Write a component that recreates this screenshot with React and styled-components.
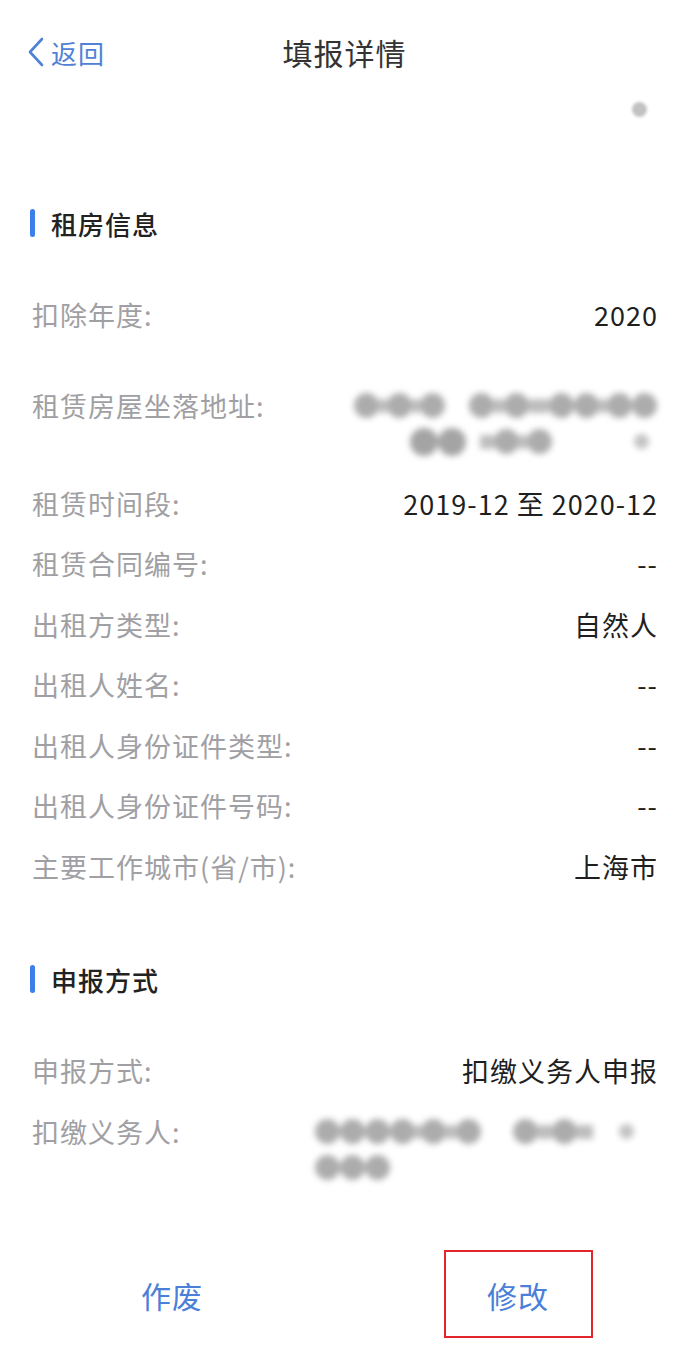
import React from "react";
import styled, { createGlobalStyle } from "styled-components";

//-----데이터
const rentRows = [
  { label: "扣除年度:", value: "2020" },
  {
    label: "租赁房屋坐落地址:",
    gap: 30,
    blur: {
      align: "right",
      lines: [
        [["o", 8, "o", 8, "o"], ["o", 10, "o", 20, "o", "o", 8, "o", "o"]],
        [["O", "O"], [14, "o", 8, "o"], ["d"]],
      ],
      lineGaps: [[24], [14, 82]],
      padRight: [0, 8],
    },
  },
  { label: "租赁时间段:", value: "2019-12 至 2020-12", gap: 2 },
  { label: "租赁合同编号:", value: "--" },
  { label: "出租方类型:", value: "自然人" },
  { label: "出租人姓名:", value: "--" },
  { label: "出租人身份证件类型:", value: "--" },
  { label: "出租人身份证件号码:", value: "--" },
  { label: "主要工作城市(省/市):", value: "上海市" },
];

const reportRows = [
  { label: "申报方式:", value: "扣缴义务人申报" },
  {
    label: "扣缴义务人:",
    blur: {
      align: "left",
      width: 342,
      lines: [
        [["o", "o", "o", "o", 6, "o", 10, "o"], ["o", 14, "o", 16], ["d"]],
        [["o", "o", "o"]],
      ],
      lineGaps: [[32, 26], []],
      padRight: [0, 0],
    },
  },
];

//-----부품: 가려진 글자 (흐림 처리)
function BlurSegment({ tokens }) {
  return (
    <Segment>
      {tokens.map((t, i) => {
        if (typeof t === "number") return <Link key={i} style={{ width: t }} />;
        return <Bead key={i} $kind={t} />;
      })}
    </Segment>
  );
}

function BlurValue({ blur }) {
  return (
    <BlurBlock $align={blur.align} $width={blur.width}>
      {blur.lines.map((segs, li) => (
        <BlurLine key={li} $align={blur.align} $padRight={blur.padRight[li]}>
          {segs.map((seg, si) => (
            <React.Fragment key={si}>
              {si > 0 && <Spacer style={{ width: blur.lineGaps[li][si - 1] }} />}
              <BlurSegment tokens={seg} />
            </React.Fragment>
          ))}
        </BlurLine>
      ))}
    </BlurBlock>
  );
}

function InfoRow({ row }) {
  return (
    <Row $gap={row.gap || 0}>
      <Label>{row.label}</Label>
      {row.blur ? <BlurValue blur={row.blur} /> : <Value>{row.value}</Value>}
    </Row>
  );
}

//-----메인
export default function App() {
  return (
    <>
      <GlobalStyle />
      <Page>
        <Header>
          <Back>
            <svg width="18" height="30" viewBox="0 0 18 30">
              <path
                d="M15 2 L3 15 L15 28"
                fill="none"
                stroke="#4f82d6"
                strokeWidth="2.6"
                strokeLinecap="round"
                strokeLinejoin="round"
              />
            </svg>
            <span>返回</span>
          </Back>
          <Title>填报详情</Title>
        </Header>

        <TopDotRow>
          <Bead $kind="d" />
        </TopDotRow>

        <SectionTitle $top={92}>租房信息</SectionTitle>
        {rentRows.map((row) => (
          <InfoRow key={row.label} row={row} />
        ))}

        <SectionTitle $top={68}>申报方式</SectionTitle>
        {reportRows.map((row) => (
          <InfoRow key={row.label} row={row} />
        ))}

        <Footer>
          <ActionCell>
            <Action>作废</Action>
          </ActionCell>
          <ActionCell>
            <Action $marked>修改</Action>
          </ActionCell>
        </Footer>
      </Page>
    </>
  );
}

//-----스타일
const GlobalStyle = createGlobalStyle`
  body {
    margin: 0;
    background: #ffffff;
    font-family: "Noto Sans CJK SC", "Noto Sans", sans-serif;
  }
`;

const Page = styled.div`
  width: 688px;
  min-height: 1363px;
  background: #ffffff;
  display: flex;
  flex-direction: column;
  padding: 0 31px 0 32px;
  box-sizing: border-box;
`;

const Header = styled.div`
  position: relative;
  height: 80px;
  margin-top: 12px;
  display: flex;
  align-items: center;
  justify-content: center;
`;

const Back = styled.div`
  position: absolute;
  left: -5px;
  top: 0;
  height: 80px;
  display: flex;
  align-items: center;
  gap: 6px;
  color: #4f82d6;
  font-size: 26px;
  letter-spacing: 1px;
`;

const Title = styled.div`
  font-size: 30px;
  color: #333333;
  letter-spacing: 1px;
`;

const TopDotRow = styled.div`
  display: flex;
  justify-content: flex-end;
  margin-top: 10px;
  padding-right: 10px;
  filter: blur(1.5px);
`;

const SectionTitle = styled.div`
  display: flex;
  align-items: center;
  gap: 16px;
  height: 28px;
  margin-top: ${(p) => p.$top}px;
  margin-bottom: 48px;
  margin-left: -2px;
  font-size: 26px;
  font-weight: 500;
  letter-spacing: 1px;
  color: #222222;

  &::before {
    content: "";
    width: 5px;
    height: 28px;
    border-radius: 3px;
    background: #3d7fe8;
  }
`;

const Row = styled.div`
  display: flex;
  justify-content: space-between;
  align-items: flex-start;
  padding: 12px 0;
  margin-top: ${(p) => p.$gap}px;
  line-height: 36.5px;
`;

const Label = styled.div`
  font-size: 27px;
  letter-spacing: 1px;
  color: #a0a0a4;
  white-space: nowrap;
`;

const Value = styled.div`
  font-size: 27px;
  letter-spacing: 1px;
  color: #1f1f1f;
  white-space: nowrap;
  margin-right: -1px;
`;

const BlurBlock = styled.div`
  display: flex;
  flex-direction: column;
  width: ${(p) => (p.$width ? `${p.$width}px` : "auto")};
  filter: blur(3.2px);
`;

const BlurLine = styled.div`
  height: 36px;
  display: flex;
  align-items: center;
  justify-content: ${(p) => (p.$align === "left" ? "flex-start" : "flex-end")};
  padding-right: ${(p) => p.$padRight}px;
`;

const Segment = styled.div`
  display: flex;
  align-items: center;
`;

const Spacer = styled.span`
  display: block;
`;

const Bead = styled.span`
  display: block;
  flex-shrink: 0;
  width: ${(p) => (p.$kind === "d" ? 15 : p.$kind === "O" ? 28 : 25)}px;
  height: ${(p) => (p.$kind === "d" ? 15 : p.$kind === "O" ? 28 : 25)}px;
  border-radius: 50%;
  background: ${(p) => (p.$kind === "O" ? "#a4a4a4" : p.$kind === "d" ? "#c2c2c2" : "#acacac")};
`;

const Link = styled.span`
  display: block;
  height: 14px;
  background: #bdbdbd;
`;

const Footer = styled.div`
  display: grid;
  grid-template-columns: 1fr 1fr;
  margin: 52px -31px 0 -32px;
`;

const ActionCell = styled.div`
  display: flex;
  justify-content: center;
`;

const Action = styled.div`
  width: 149px;
  height: 88px;
  box-sizing: border-box;
  display: flex;
  align-items: center;
  justify-content: center;
  font-size: 30px;
  letter-spacing: 1px;
  color: #4a80d8;
  border: 2px solid ${(p) => (p.$marked ? "#e2262b" : "transparent")};
  margin-left: ${(p) => (p.$marked ? 4 : 0)}px;
  padding-top: 3px;
`;
